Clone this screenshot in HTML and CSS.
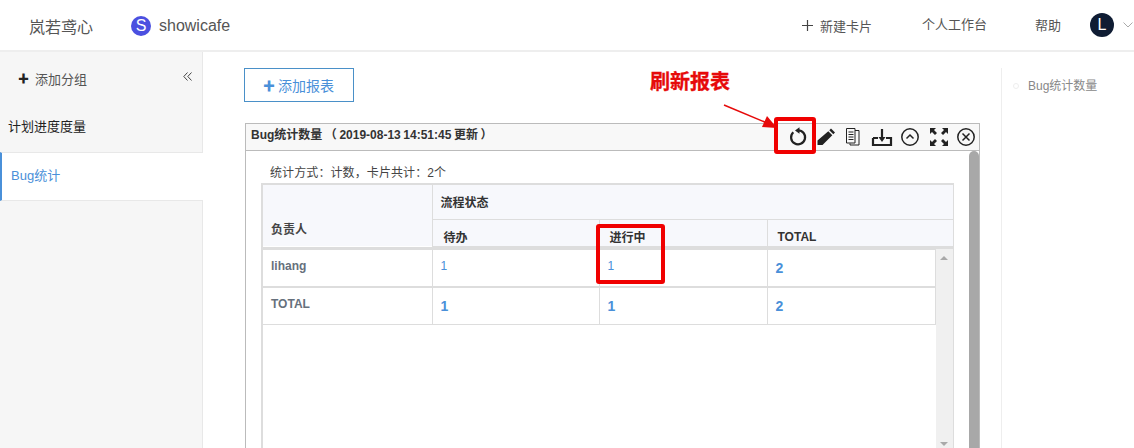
FILE: index.html
```html
<!DOCTYPE html>
<html lang="zh">
<head>
<meta charset="utf-8">
<title>Bug统计</title>
<link rel="stylesheet" href="styles.css">
</head>
<body>
<header class="topbar">
  <div class="brand">岚若鸢心</div>
  <div class="team"><span class="team-logo">S</span><span>showicafe</span></div>
  <nav class="topnav">
    <span class="new-card"><svg class="plus-thin" viewBox="0 0 12 12"><path d="M6 0v12M0 6h12"/></svg>新建卡片</span>
    <span class="nav-work">个人工作台</span>
    <span class="nav-help">帮助</span>
    <span class="avatar">L</span>
    <svg class="caret" viewBox="0 0 10 6"><path d="M.5.5 5 5 9.500.5"/></svg>
  </nav>
</header>
<div class="layout">
  <aside class="sidebar">
    <div class="side-head">
      <span class="add-group"><span class="plus-bold">✚</span>添加分组</span>
      <svg class="collapse" viewBox="0 0 9 9"><path d="M4.500.5.800 4.500l3.700 4M8.500.5 4.800 4.500l3.700 4"/></svg>
    </div>
    <div class="side-item">计划进度度量</div>
    <div class="side-item active">Bug统计</div>
  </aside>
  <main class="main">
    <button class="add-report"><span class="plus-blue">✚</span>添加报表</button>
    <section class="card">
      <div class="card-title">
        <span class="card-name">Bug统计数量 （ 2019-08-13 14:51:45 更新 ）</span>
        <div class="tools">
          <svg class="tool t-refresh" viewBox="0 0 20 20"><path class="s2" d="M5.300 5.200A7 7 0 1 0 10 3.300"/><path class="f" d="M11.500 .3v6.400L7 3.500z"/></svg>
          <svg class="tool t-pencil" viewBox="0 0 20 20"><path class="f" d="M15 1.500 19 5.500 17.300 7.200 13.300 3.200zM12.300 4.200l4 4L6.500 18H1.500v-4.500z"/></svg>
          <svg class="tool" viewBox="0 0 20 20"><path class="s1" d="M12 3.500h4v14.500H7v-1.500M3.500 1.500H12V16H3.500zM5.500 5h5M5.500 7.500h5M5.500 10h5M5.500 12.500h5"/></svg>
          <svg class="tool t-download" viewBox="0 0 20 20"><path class="s2" d="M1 11v7h18v-7h-5M6 11H1M10 2v11"/><path class="f" d="M6.500 10h7L10 15z"/></svg>
          <svg class="tool" viewBox="0 0 20 20"><circle class="s15" cx="10" cy="10" r="8.200"/><path class="s15" d="M6.500 11.500 10 8l3.500 3.500"/></svg>
          <svg class="tool t-expand" viewBox="0 0 20 20"><path class="f" d="M1 1h6L5 3l3 3-2 2-3-3-2 2zM19 1v6l-2-2-3 3-2-2 3-3-2-2zM1 19v-6l2 2 3-3 2 2-3 3 2 2zM19 19h-6l2-2-3-3 2-2 3 3 2-2z"/></svg>
          <svg class="tool" viewBox="0 0 20 20"><circle class="s15" cx="10" cy="10" r="8.200"/><path class="s15" d="m6.500 6.500 7 7m0-7-7 7"/></svg>
        </div>
      </div>
      <div class="card-body">
        <div class="report">
          <p class="summary">统计方式：计数，卡片共计：2个</p>
          <div class="table-box">
            <table class="report-table head-table">
              <colgroup><col class="c1"><col class="c2"><col class="c3"><col class="c4h"></colgroup>
              <tr class="h1"><th rowspan="2" class="owner">负责人</th><th colspan="3">流程状态</th></tr>
              <tr class="h2"><th>待办</th><th>进行中</th><th>TOTAL</th></tr>
            </table>
            <div class="table-scroll">
              <table class="report-table body-table">
                <colgroup><col class="c1"><col class="c2"><col class="c3"><col class="c4"></colgroup>
                <tr class="r1"><td class="name">lihang</td><td class="num">1</td><td class="num">1</td><td class="sum">2</td></tr>
                <tr class="r2"><td class="name">TOTAL</td><td class="sum">1</td><td class="sum">1</td><td class="sum">2</td></tr>
              </table>
              <div class="inner-bar"><span class="tri up"></span><span class="tri down"></span></div>
            </div>
          </div>
        </div>
        <div class="outer-bar"></div>
      </div>
    </section>
  </main>
  <aside class="outline"><span class="dot"></span>Bug统计数量</aside>
</div>
<div class="note">刷新报表</div>
<div class="mark mark-refresh"></div>
<div class="mark mark-cell"></div>
<svg class="arrow" viewBox="0 0 56 26"><path d="M1 1 44 19" /><path class="head" d="M54 24 39 23 44 12z"/></svg>
</body>
</html>
```
FILE: styles.css
```css
* { box-sizing: border-box; }
html, body { margin: 0; height: 448px; overflow: hidden; background: #fff; }
body { font-family: "Liberation Sans", "Noto Sans CJK SC", sans-serif; font-size: 13px; color: #333; position: relative; }

.topbar { height: 52px; display: flex; align-items: center; border-bottom: 2px solid #eee; padding-left: 29px; }
.brand { font-size: 16px; color: #555; width: 102px; padding-top: 2px; }
.team { display: flex; align-items: center; gap: 8px; font-size: 16px; color: #555; padding-top: 2px; }
.team-logo { width: 20px; height: 20px; border-radius: 50%; background: #4b50e0; color: #fff; display: flex; align-items: center; justify-content: center; font-size: 16px; }
.topnav { margin-left: auto; display: flex; align-items: center; padding-right: 1px; color: #555; }
.new-card { display: flex; align-items: center; gap: 7px; width: 120px; }
.plus-thin { width: 11px; height: 11px; fill: none; stroke: #444; stroke-width: 1.300; }
.nav-work { width: 113px; padding-bottom: 3px; }
.nav-help { width: 55px; padding-bottom: 1px; }
.avatar { width: 24px; height: 24px; border-radius: 50%; background: #0f1c33; color: #fff; display: flex; align-items: center; justify-content: center; font-size: 16px; }
.caret { width: 10px; height: 6px; margin-left: 9px; fill: none; stroke: #aaa; }

.layout { display: flex; height: 396px; }
.sidebar { width: 203px; flex: none; background: #f6f6f6; border-right: 1px solid #e8e8e8; }
.side-head { height: 52px; display: flex; align-items: center; justify-content: space-between; padding: 0 10px 0 18px; }
.add-group { color: #555; display: flex; align-items: center; gap: 6px; }
.plus-bold { color: #222; font-size: 11px; }
.collapse { width: 9px; height: 9px; margin-bottom: 4px; fill: none; stroke: #444; }
.side-item { height: 48px; display: flex; align-items: center; padding: 0 0 6px 8px; color: #222; }
.side-item.active { height: 49px; background: #fff; color: #4a90d9; border-left: 2px solid #4a90d9; border-top: 1px solid #e8e8e8; border-bottom: 1px solid #e8e8e8; padding: 0 0 4px 9px; margin-right: -1px; }

.main { width: 798px; flex: none; padding: 16px 0 0 41px; }
.add-report { display: flex; align-items: center; justify-content: center; gap: 3px; width: 110px; height: 34px; background: #fff; border: 1px solid #4a90c8; color: #4a90d9; font: 14px "Liberation Sans", "Noto Sans CJK SC", sans-serif; padding: 0 1px 0 0; }
.plus-blue { font-size: 12px; }
.card { width: 735px; height: 330px; margin: 21px 0 0 1px; border: 1px solid #bbb; border-bottom: 0; }
.card-title { height: 27px; background: #f8f8f8; border-bottom: 1px solid #bbb; display: flex; justify-content: space-between; padding: 0 3px 0 5px; }
.card-name { font-size: 12px; line-height: 23px; font-weight: bold; color: #333; white-space: nowrap; word-spacing: -.8px; }
.tools { display: flex; gap: 9px; }
.tool { width: 20px; height: 20px; margin-top: 3px; overflow: visible; }
.t-refresh { margin-right: -1px; }
.t-pencil, .t-expand { margin-right: -2px; }
.t-download { margin-right: -1px; }
.tool .f { fill: #222; }
.tool .s1, .tool .s15, .tool .s2 { fill: none; stroke: #222; }
.tool .s1 { stroke-width: 1; }
.tool .s15 { stroke-width: 1.500; }
.tool .s2 { stroke-width: 2.200; }

.card-body { display: flex; height: 302px; }
.report { flex: 1; padding: 15px 0 0 15px; min-width: 0; }
.summary { margin: 0 0 2px 9px; height: 15px; line-height: 15px; font-size: 12px; letter-spacing: .1px; color: #444; font-family: "Liberation Sans", "Noto Sans CJK TC", sans-serif; }
.table-box { width: 693px; height: 270px; border-top: 2px solid #ddd; border-left: 2px solid #ddd; border-right: 1px solid #ddd; display: flex; flex-direction: column; }
.report-table { border-collapse: collapse; table-layout: fixed; }
.head-table { width: 690px; }
.body-table { width: 672px; flex: none; align-self: flex-start; }
.c1 { width: 169px; }
.c2 { width: 167px; }
.c3 { width: 168px; }
.c4h { width: 186px; }
.c4 { width: 168px; }
.head-table th { background: #f7f8fc; font-weight: bold; text-align: left; font-size: 12px; color: #333; border: 1px solid #ddd; border-top: 0; padding: 0 8px; }
.head-table th:first-child { border-left: 0; }
.head-table th:last-child { border-right: 0; }
.h1 { height: 34px; }
.h2 { height: 27px; }
.h2 th { padding-top: 8px; padding-left: 10px; }
.head-table .h2 th:first-child { padding-left: 11px; }
.head-table .owner { vertical-align: bottom; padding-bottom: 9px; border-bottom: 0; color: #444; }
.table-scroll { display: flex; flex: 1; border-top: 2px solid #ddd; min-height: 0; }
.body-table td { border: 1px solid #ddd; padding: 0 8px; vertical-align: top; font-size: 12px; }
.body-table td:first-child { border-left: 0; }
.r1 { height: 38px; }
.r1 td { border-bottom-width: 2px; }
.r2 { height: 37px; }
.body-table .name { font-weight: bold; color: #66707c; padding-top: 9px; }
.body-table .num { color: #4a90d9; padding-top: 9px; }
.body-table .sum { color: #4a90d9; font-weight: bold; font-size: 14px; padding-top: 10px; }
.inner-bar { flex: 1; background: #f0f0f0; display: flex; flex-direction: column; justify-content: space-between; align-items: center; padding: 7px 0; }
.tri { width: 0; height: 0; border-left: 4px solid transparent; border-right: 4px solid transparent; }
.tri.up { border-bottom: 4px solid #a9a9a9; }
.tri.down { border-top: 4px solid #a9a9a9; }
.outer-bar { width: 10px; flex: none; background: #a8a8a8; border-radius: 5px 5px 0 0; }

.outline { flex: 1; margin-top: 16px; border-left: 1px solid #eee; padding: 11px 0 0 11px; color: #888; font-size: 12px; display: flex; align-items: flex-start; gap: 9px; line-height: 14px; }
.dot { width: 6px; height: 6px; margin-top: 4px; border-radius: 50%; border: 1px solid #eee; }

.note { position: absolute; left: 650px; top: 68px; font-size: 20px; line-height: 28px; font-weight: bold; color: #e60a0a; -webkit-text-stroke: .3px #e60a0a; }
.mark { position: absolute; border: 4px solid #f00000; border-radius: 3px; }
.mark-refresh { left: 774px; top: 117px; width: 42px; height: 37px; }
.mark-cell { left: 596px; top: 224px; width: 69px; height: 60px; }
.arrow { position: absolute; left: 723px; top: 104px; width: 56px; height: 26px; }
.arrow path { fill: none; stroke: #e60a0a; stroke-width: 1.600; }
.arrow .head { fill: #e60a0a; stroke: none; }
```
